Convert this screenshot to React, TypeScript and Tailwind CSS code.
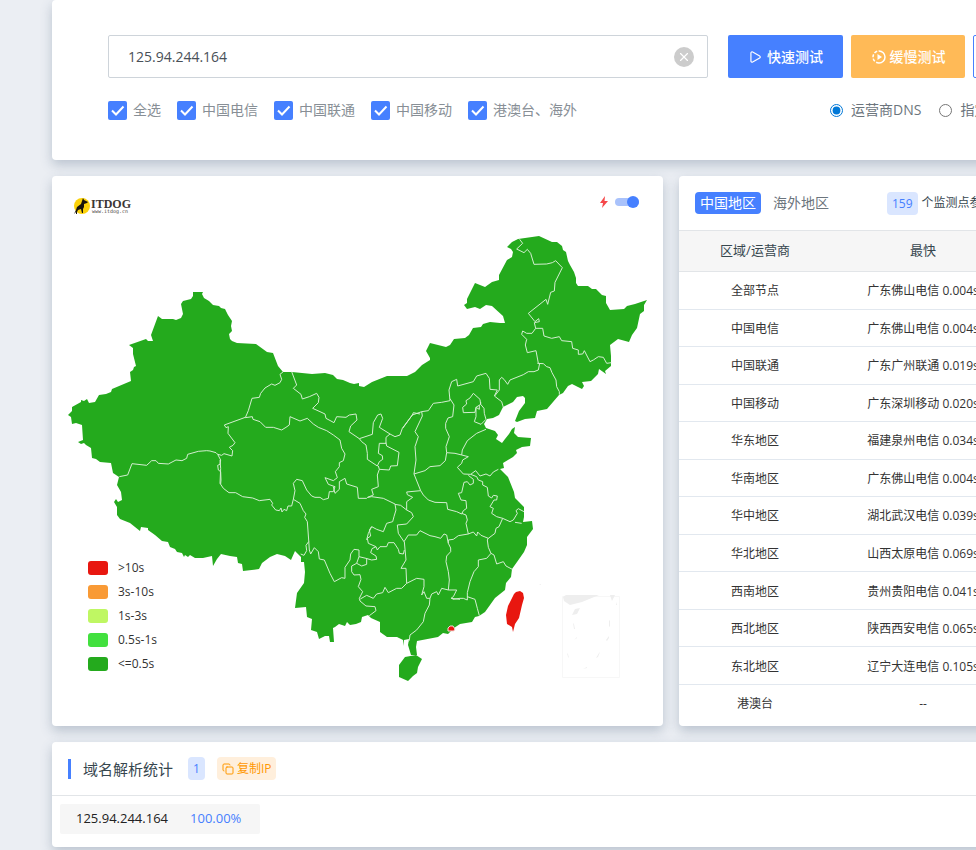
import { Copy, Play, X } from 'lucide-react'

const carriers = ['全选', '中国电信', '中国联通', '中国移动', '港澳台、海外']

const legend = [
  { label: '>10s', swatch: 'bg-[#e81710]' },
  { label: '3s-10s', swatch: 'bg-[#f99a35]' },
  { label: '1s-3s', swatch: 'bg-[#bff763]' },
  { label: '0.5s-1s', swatch: 'bg-[#42e03e]' },
  { label: '<=0.5s', swatch: 'bg-[#24aa1d]' },
]

const regions = [
  { name: '全部节点', fastest: '广东佛山电信 0.004s' },
  { name: '中国电信', fastest: '广东佛山电信 0.004s' },
  { name: '中国联通', fastest: '广东广州联通 0.019s' },
  { name: '中国移动', fastest: '广东深圳移动 0.020s' },
  { name: '华东地区', fastest: '福建泉州电信 0.034s' },
  { name: '华南地区', fastest: '广东佛山电信 0.004s' },
  { name: '华中地区', fastest: '湖北武汉电信 0.039s' },
  { name: '华北地区', fastest: '山西太原电信 0.069s' },
  { name: '西南地区', fastest: '贵州贵阳电信 0.041s' },
  { name: '西北地区', fastest: '陕西西安电信 0.065s' },
  { name: '东北地区', fastest: '辽宁大连电信 0.105s' },
  { name: '港澳台', fastest: '--' },
]

const mainland =
  '68,415 72,411 72,407 81,402 81,400 84,401 87,399 89,403 95,402 99,395 106,394 111,392 112,389 131,381 130,372 133,370 134,367 136,366 133,354 133,348 129,345 146,339 148,341 153,341 151,335 158,316 162,319 173,319 176,320 181,318 183,314 181,304 183,301 191,299 193,296 193,292 203,292 202,294 204,298 209,301 213,305 219,306 221,308 225,309 228,315 232,321 231,326 232,331 229,334 230,339 232,341 237,343 256,344 267,352 273,353 278,366 283,372 292,372 312,374 325,373 333,375 337,379 343,380 350,383 354,384 359,383 359,386 364,387 372,382 387,376 407,376 415,372 422,365 430,360 430,358 426,351 430,343 446,347 450,345 454,339 465,338 469,335 473,328 481,327 483,324 490,322 500,323 505,323 503,316 492,306 486,305 480,309 475,307 467,309 464,305 467,303 467,299 475,283 485,287 492,282 499,280 499,275 507,260 512,257 513,252 511,249 507,247 512,242 518,239 539,236 552,242 557,242 562,246 563,250 566,252 568,261 570,265 574,272 576,278 576,283 578,286 588,286 592,289 596,289 602,295 606,296 606,303 610,310 624,309 627,306 635,304 647,300 644,305 644,311 640,314 637,328 632,335 629,342 618,339 610,345 611,356 611,366 605,371 606,374 599,369 598,374 591,381 582,382 584,386 582,389 572,384 568,386 563,393 559,395 547,409 537,411 535,418 525,419 517,422 515,421 519,411 525,403 525,398 523,396 517,397 513,402 503,407 499,415 493,418 487,419 484,424 486,428 495,431 498,435 496,439 502,443 505,439 509,434 512,429 515,427 514,433 518,437 531,438 530,446 522,447 516,450 517,453 513,457 503,463 504,468 500,469 508,477 514,492 515,498 519,502 524,507 524,517 523,522 532,521 533,529 527,537 527,545 524,552 517,562 512,569 511,577 506,583 505,590 495,598 485,612 479,616 475,617 472,622 460,624 454,628 448,634 443,633 438,637 417,641 416,647 417,655 411,655 408,645 409,639 404,640 404,646 403,640 397,637 387,637 380,632 380,622 371,618 368,615 362,617 361,622 356,624 350,625 347,622 345,626 339,624 335,627 333,628 334,642 330,642 329,636 325,636 319,639 317,632 311,630 312,619 307,617 306,607 295,608 297,593 304,583 305,572 304,562 301,562 301,557 295,551 291,560 285,556 277,554 270,557 262,563 259,569 243,571 242,564 238,563 237,557 230,556 221,554 217,559 213,566 212,556 203,558 195,558 190,555 188,557 185,555 184,557 182,553 177,552 175,549 170,547 168,542 162,541 155,535 148,530 148,528 141,527 140,531 130,523 120,519 117,515 117,507 114,502 116,499 118,502 122,500 121,492 117,485 119,477 113,473 111,463 100,462 96,459 92,458 91,448 86,445 84,443 81,444 78,442 83,440 82,425 76,423 72,424 71,417'

// Province borders, grouped by tile; points are in thirds of a map unit from the tile origin.
const borderTiles = [
  {
    x: 60,
    y: 280,
    lines: [
      '556,412 493,435 498,443 505,440 504,460 525,488 519,496 508,502 518,512 516,528 492,521 485,526 473,523 468,518 450,513 440,512 415,514 383,523 380,535 366,542 348,540 325,552 295,550 288,542 275,542 260,556 216,551 203,585 178,590',
      '473,523 482,540 480,553 473,556 475,570 482,575 483,600 482,612',
    ],
  },
  {
    x: 220,
    y: 340,
    lines: [
      '190,95 180,103 185,118 180,128 165,136 155,132 135,144 122,160 118,172 96,175 85,212 76,233 97,230 99,238 120,245 137,262 160,262 185,270 198,262 208,255 210,230 240,243 262,235 280,252 295,262 320,272 340,285 360,300 365,325 375,342 370,362 358,368 358,380 346,395 352,413 340,422 315,413 325,433 345,440 340,455 328,455 325,475 310,479 300,472 285,472 275,468 260,450 247,422 230,418 220,430 225,452 220,478 240,490 250,512 258,522 254,532 262,545 266,600',
      '0,360 2,385 0,430 10,445 27,458 47,458 68,470 98,474 118,482 150,478 158,490 155,495 167,510 178,512 183,504 186,516 192,508 200,512 204,498 215,498 220,478',
      '215,95 230,135 220,145 243,163 247,177 268,170 290,160 297,172 295,188 278,205 300,215 315,222 318,235 342,248 350,230 378,232 388,225 408,222 411,240 392,258 387,275 418,296 457,283 460,248 473,225 483,222 488,235 478,262 510,282 525,290 540,285 547,265 577,225 580,218 600,222',
      '418,296 425,305 438,315 442,340 442,358 472,378 478,365 488,358 487,347 475,340 478,310 498,310 498,292 510,282',
      '498,308 500,318 537,337 532,377 512,378 508,390 478,388 475,378',
      '478,388 472,405 475,440 455,448 460,465 443,472 440,475 415,475 412,442 380,432 375,415 358,425 358,448 345,460 340,440',
      '443,472 455,470 490,475 525,492',
      '525,492 528,510 522,530 518,545 500,550 490,575 470,568 455,560 445,580 440,600',
    ],
  },
  {
    x: 400,
    y: 220,
    lines: [
      '359,58 368,70 350,87 372,98 382,88 392,100 402,133 440,132 457,128 467,122 487,143 476,165 465,187 463,213 452,217 443,253 438,238 385,280 405,305 416,296 418,305 403,308 407,325 396,340 380,340 368,333 365,343 380,358 376,375 382,398 408,392 415,430',
      '407,325 428,325 432,348 455,355 478,350 485,362 515,365 518,385 535,390 535,403 548,402 553,392 570,425 580,420 595,410 610,412 620,430 634,428',
      '412,430 430,431 440,440 450,443 456,458 468,480 470,500 478,515 478,524',
      '419,430 415,450 402,455 385,455 370,464 330,480 323,493 312,478 305,472 298,480 298,510 284,528',
    ],
  },
  {
    x: 380,
    y: 370,
    lines: [
      '68,175 97,135 125,125 127,138 105,185 115,200 105,230 108,270 102,312',
      '125,125 145,122 160,100 185,97 210,92 207,60 215,35 230,28 233,48 280,35 290,18 318,10 328,25 330,58 352,60 343,78 365,95 370,112',
      '210,86 222,105 218,140 204,144 197,160 197,175 208,200 198,230 200,248 196,272 180,287 150,290 135,302 102,312',
      '200,248 225,250 245,255 247,240 262,212 290,190 318,178',
      '248,112 260,102 258,92 270,84 280,70 300,88 302,103 288,112 285,127 250,128 248,112',
      '302,96 302,103 312,115 313,130 318,148 303,163 283,155 288,140 288,112 298,118 298,106',
      '245,255 265,260 248,270 245,280 232,292 250,312 272,313 287,302 300,318 318,312 330,318 340,306 355,298',
      '102,312 122,362 130,375 145,390 165,397 200,398 203,418 230,425 245,432 250,422 260,415 258,392 243,390 235,370 245,368 252,337 262,335 270,345 280,340 280,328 265,316',
      '122,362 80,366 82,374 98,382 80,395 80,420',
      '272,313 290,320 295,330 308,335 308,345 322,352 325,378 335,384 340,376 352,378 350,390 342,390 330,410 340,415 335,430 350,440 368,445 390,455 400,450 412,430 408,422 415,416 432,425',
      '405,457 425,460',
      '245,430 258,435 262,450 258,460 265,492 280,486 290,498 293,486 303,496 325,505 345,490 348,475 357,470 368,445',
      '265,492 235,497 220,508 205,510 205,520 212,534',
      '205,520 200,495 192,492 182,505 165,500 150,497 120,482 110,495 85,495 72,515 55,490 52,465 80,462 100,440 95,428 80,420 62,406 45,403',
    ],
  },
  {
    x: 280,
    y: 480,
    lines: [
      '92,222 103,203 115,215 118,237 133,240 150,280 163,305 185,293 195,295 195,262 210,240 212,222 222,208 237,210 237,230 258,235 275,240 290,238 288,228 272,218 276,206 288,200',
      '86,185 78,196 80,212 72,226 62,222',
      '86,180 88,210 92,222',
      '237,230 230,250 245,258 260,253 260,235',
      '230,250 215,258 215,275 222,285 240,284 243,298 235,320 248,335 238,355 240,363 258,378 285,380 288,392 268,407',
      '241,357 260,346 280,355 290,342 308,338 315,322 325,338 350,325 365,325 380,310 378,265 363,265 378,240 373,185',
      '288,200 265,190 262,175 272,168 268,150 275,140',
      '288,200 292,210 300,200 320,200 325,188 342,188 355,208 358,220 370,222 373,210',
      '380,310 410,295 432,298 432,320 425,345 432,335 440,355 450,355 448,375 435,400 430,425 410,450 390,465 388,480 385,485',
      '450,355 455,342 470,335 475,345 485,325 505,330 530,330 520,350 513,355 540,358',
    ],
  },
  {
    x: 380,
    y: 520,
    lines: [
      '212,84 212,95 200,108 198,125 205,155 208,180 205,210',
      '218,238 240,235 250,235 262,240 262,218 270,185 282,155 295,140 295,120 320,115 333,100 325,82 322,60 325,54',
      '262,230 285,238 292,265 298,287',
      '333,100 342,105 350,132 370,125 378,138 397,148',
    ],
  },
]

const ChinaMap = () => (
  <svg viewBox="52 232 611 494" className="block w-full" role="img" aria-label="中国地图">
    <g fill="#24aa1d">
      <polygon points={mainland} />
      <polygon points="405,657 416,655 422,659 418,667 417,673 413,676 408,681 399,677 399,665" />
    </g>
    <g fill="none" stroke="#d3eed0" strokeWidth="3" strokeLinejoin="round">
      {borderTiles.map((tile) => (
        <g key={`${tile.x}-${tile.y}`} transform={`translate(${tile.x} ${tile.y}) scale(0.33333)`}>
          {tile.lines.map((points) => (
            <polyline key={points} points={points} />
          ))}
        </g>
      ))}
    </g>
    <g fill="#e81710">
      <path d="M520 591l3 2 1 5-2 7-3 13-4 6-2 8-1-5-5-3-1-9 2-9 6-12 2-2z" />
      <path d="M448 628l2-2 3 0 2 3-1 2h-6z" stroke="#f4dcd8" />
    </g>
    {/* South China Sea inset */}
    <g fill="#eeeeee">
      <path d="M562.500 596.500h57v81h-57z" fill="none" stroke="#f7f7f7" />
      <path d="M563 597l3-2h33l-17 7-12 3-6-4z" />
      <path d="M610 595h5l-3 6zM575 609l5-1-3 6-5 1zM609 621l1-1v6l-1 1zM606 640l3-4v2l-2 3zM596 658l3-5 1-1-2 5zM574 640l3-3v1zM567 653l1 1 1 4-1-1zM583 669l4-2v1zM573 623l1 1 1 5h-1zM616 605l1-3v3zM539 585l2-1v1z" />
    </g>
  </svg>
)

const Logo = () => (
  <svg width="60" height="20" viewBox="0 0 60 20" role="img" aria-label="ITDOG">
    <circle cx="9" cy="9" r="8" fill="#fbd20a" />
    <path d="M10 1l1 2 4 2-1 1-3 1 0 3-1 2 0 4h-1l-1-4-3 1-1 2 0 2H3l0-2-2 2 2-4 1-3 4-3 1-3z" fill="#17130c" />
    <text x="18" y="11" fontSize="12" fontWeight="bold" fill="#3c3633" fontFamily="Liberation Serif, serif">ITDOG</text>
    <text x="19" y="16" fontSize="5" fill="#4a4441" fontFamily="DejaVu Sans Mono, monospace">www.itdog.cn</text>
  </svg>
)

const SlowIcon = () => (
  <svg width="16" height="16" viewBox="0 0 16 16" fill="none" stroke="currentColor" strokeWidth="1.500">
    <path d="M8 2a6 6 0 0 1 0 12" />
    <path d="M8 14a6 6 0 0 1 0-12" strokeDasharray="3 1.500" />
    <path d="M6.500 5l4.500 3-4.500 3z" fill="currentColor" stroke="none" />
  </svg>
)

const card = 'rounded bg-white shadow-[0_5px_12px_rgba(60,85,115,0.28)]'

const TestForm = () => (
  <form className={`${card} px-14 pt-[35px] pb-[39px]`} onSubmit={(e) => e.preventDefault()}>
    <div className="flex h-[43px] gap-2">
      <div className="mr-3 flex w-[600px] items-center rounded-xs border border-[#ced4da] px-[13px]">
        <input
          type="text"
          aria-label="域名或IP"
          defaultValue="125.94.244.164"
          className="min-w-0 flex-1 px-1.5 text-sm text-[#495057] outline-none"
        />
        <button type="button" aria-label="清空" className="grid size-5 place-items-center rounded-full bg-[#cccccc] text-white">
          <X className="size-3.5" />
        </button>
      </div>
      <button type="submit" className="flex w-[115px] items-center justify-center gap-[5px] rounded-xs bg-[#4680ff] text-sm font-medium text-white">
        <Play className="size-3.5" />
        快速测试
      </button>
      <button type="button" className="flex w-[114px] items-center justify-center gap-[3px] rounded-xs bg-[#ffba57] text-sm font-medium text-white">
        <SlowIcon />
        缓慢测试
      </button>
      <button type="button" aria-label="持续测试" className="w-[114px] rounded-xs border border-[#4680ff]" />
    </div>

    <div className="mt-[21px] flex h-[22px] items-center text-sm">
      <div className="flex w-[722px] gap-4 text-[#888f96]">
        {carriers.map((name) => (
          <label key={name} className="flex items-center gap-1.5">
            <span className="grid size-[19px]">
              <input type="checkbox" defaultChecked className="col-start-1 row-start-1 appearance-none rounded-xs bg-[#4680ff]" />
              <svg viewBox="0 0 19 19" className="pointer-events-none col-start-1 row-start-1" fill="none" stroke="#fff" strokeWidth="2">
                <path d="M4 9.500l4 4 7.500-8" />
              </svg>
            </span>
            {name}
          </label>
        ))}
      </div>
      <div className="flex gap-[18px] whitespace-nowrap text-[#6c757d]">
        <label className="flex items-center gap-2">
          <input type="radio" name="dns" defaultChecked className="size-[13px] accent-[#0078d7]" />
          运营商DNS
        </label>
        <label className="flex items-center gap-2">
          <input type="radio" name="dns" className="size-[13px]" />
          指定DNS
        </label>
      </div>
    </div>
  </form>
)

const MapCard = () => (
  <section className={`${card} relative`}>
    <div className="flex h-14 items-start justify-between pt-[21px] pr-[23px] pl-[21px]">
      <Logo />
      <label className="flex h-2.5 items-center gap-1.5">
        <svg width="10" height="14" viewBox="0 0 10 14" fill="#f5484a" aria-hidden="true">
          <path d="M6 1L1 8h3L3 13l6-7H5.500z" />
        </svg>
        <input type="checkbox" defaultChecked aria-label="闪烁" className="peer sr-only" />
        <svg width="25" height="14" viewBox="0 0 25 14" aria-hidden="true">
          <rect y="3" width="24" height="8" rx="4" fill="#a9c2fb" />
          <circle cx="18" cy="7" r="6" fill="#4680ff" />
        </svg>
      </label>
    </div>
    <ChinaMap />
    <ul className="absolute bottom-[50px] left-9 text-xs text-[#333]">
      {legend.map((item) => (
        <li key={item.label} className="flex h-6 items-center gap-2.5">
          <span className={`h-3.5 w-5 rounded-[3px] ${item.swatch}`} />
          {item.label}
        </li>
      ))}
    </ul>
  </section>
)

const RegionTable = () => (
  <section className={`${card} overflow-hidden`}>
    <div className="flex h-[54px] items-center px-4 text-sm">
      <button type="button" className="h-[22px] rounded bg-[#4680ff] px-[5px] text-white">中国地区</button>
      <button type="button" className="ml-3 text-[#6c757d]">海外地区</button>
      <p className="ml-[58px] flex items-center gap-1 text-xs whitespace-nowrap text-[#37474f]">
        <span className="rounded bg-[#dae6ff] px-[5px] leading-[23px] text-[#4680ff]">159</span>
        个监测点参与测试
      </p>
    </div>
    <table className="h-[491px] w-full table-fixed text-center text-xs text-[#333]">
      <thead>
        <tr className="h-[41px] border-y border-[#e2e5e8] bg-[#f6f6f6] text-[13px] text-[#37474f]">
          <th className="w-[152px] font-normal">区域/运营商</th>
          <th className="w-[184px] font-normal">最快</th>
          <th className="w-[184px] font-normal">最慢</th>
          <th className="font-normal">平均</th>
        </tr>
      </thead>
      <tbody>
        {regions.map((region) => (
          <tr key={region.name} className="border-b border-[#e2e8ef] last:border-0">
            <td className="pt-0.5">{region.name}</td>
            <td className="pt-0.5 whitespace-nowrap">{region.fastest}</td>
            <td />
            <td />
          </tr>
        ))}
      </tbody>
    </table>
  </section>
)

const ResolveStats = () => (
  <section className={card}>
    <div className="flex h-[54px] items-center border-b border-[#e2e5e8] px-4">
      <h2 className="border-l-3 border-[#4680ff] pl-3 text-[15px] leading-5 text-[#37474f]">域名解析统计</h2>
      <span className="ml-[15px] rounded bg-[#dae6ff] px-[5px] text-xs leading-[23px] text-[#4680ff]">1</span>
      <button type="button" className="ml-3 flex h-[23px] items-center gap-[3px] rounded bg-[#ffefdc] px-[5px] text-xs text-[#ff9800]">
        <Copy className="size-3" />
        复制IP
      </button>
    </div>
    <div className="px-2 pt-2 pb-[13px]">
      <div className="flex h-[30px] w-[200px] items-center gap-[22px] rounded-xs bg-[#f6f6f6] px-4 text-[13px]">
        <span className="text-[#222]">125.94.244.164</span>
        <span className="text-[#4680ff]">100.00%</span>
      </div>
    </div>
  </section>
)

export default function App() {
  return (
    <div className="min-h-screen overflow-x-hidden bg-[#ebeef3] font-['Open_Sans','Noto_Sans_CJK_SC',sans-serif]">
      <main className="mx-[52px] grid min-w-[1238px] gap-4">
        <TestForm />
        <div className="grid grid-cols-2 gap-4">
          <MapCard />
          <RegionTable />
        </div>
        <ResolveStats />
      </main>
    </div>
  )
}
